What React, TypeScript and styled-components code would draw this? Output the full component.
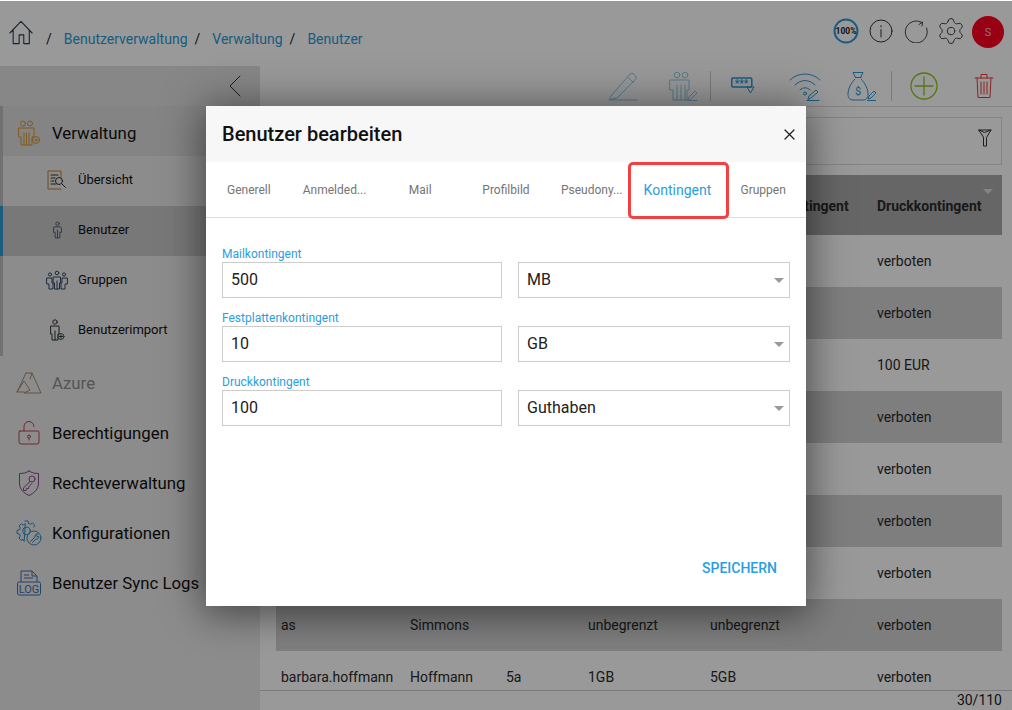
import React from 'react';
import styled, { createGlobalStyle } from 'styled-components';
import { Settings } from 'lucide-react';

const Global = createGlobalStyle`
  html, body { margin: 0; padding: 0; background: #fff; }
  body { font-family: Roboto, "Liberation Sans", sans-serif; }
  * { box-sizing: border-box; }
`;

const Page = styled.div`
  position: relative; width: 1012px; height: 710px; overflow: hidden;
  display: flex; flex-direction: column; background: #fff; color: #111;
`;
const Header = styled.header`
  flex: 0 0 66px; display: flex; align-items: center; justify-content: space-between;
  padding: 0 8px 2px 8px; background: #fff;
`;
const Crumbs = styled.nav`display: flex; align-items: flex-end; font-size: 14px; padding-top: 2px; height: 30px;`;
const HomeLink = styled.span`display: flex; width: 24px; height: 26px; margin: 0 0 1px 1px;`;
const Slash = styled.span`color: #222; margin-left: ${p => p.$m ?? 7}px; font-size: 14px;`;
const Crumb = styled.a`color: #2a9ad6; margin-left: 12px;`;
const HeadIcons = styled.div`display: flex; align-items: center;`;
const HeadSlot = styled.span`width: 35px; display: flex; justify-content: center; margin-top: -2px;`;
const Avatar = styled.div`
  width: 32px; height: 32px; border-radius: 50%; background: #ff0020; color: #f4c0c0;
  display: flex; align-items: center; justify-content: center; font-size: 11px; margin-left: 4px;
`;
const Body = styled.div`flex: 1; display: flex; min-height: 0;`;
const Sidebar = styled.aside`flex: 0 0 260px; background: #e9e9e9; display: flex; flex-direction: column;`;
const Collapse = styled.div`
  height: 40px; background: #e2e2e2; display: flex; align-items: center; justify-content: flex-end; padding-right: 19px;
`;
const Group = styled.div`border-left: 3px solid #bdbdbd; display: flex; flex-direction: column;`;
const TopItem = styled.div`
  height: 50px; display: flex; align-items: center; gap: 10px; font-size: 16.8px; padding-top: 3px;
  padding-left: ${p => (p.$inGroup ? 13 : 16)}px;
  background: ${p => (p.$open ? '#dcdcdc' : 'transparent')};
  color: ${p => (p.$muted ? '#8e8e8e' : '#111')};
`;
const SubItem = styled.div`
  height: 50px; display: flex; align-items: center; gap: 8px; font-size: 13px; padding: 0 0 3px 41px;
  margin-left: ${p => (p.$active ? '-3px' : '0')};
  border-left: ${p => (p.$active ? '3px solid #2a9ad6' : '0')};
  background: ${p => (p.$active ? '#c8c8c8' : 'transparent')};
`;
const IconBox = styled.span`flex: 0 0 26px; display: flex; justify-content: center;`;
const Main = styled.main`flex: 1; display: flex; flex-direction: column; min-width: 0; background: #fff;`;
const Toolbar = styled.div`
  flex: 0 0 41px; display: flex; justify-content: flex-end; align-items: center; border-bottom: 1px solid #ddd; background: #fff;
`;
const ToolSlot = styled.span`
  width: ${p => p.$w}px; display: flex; justify-content: center; opacity: ${p => p.$fade ?? 1};
`;
const ToolSep = styled.span`width: 1px; height: 30px; background: #ccc;`;
const Filter = styled.div`
  margin: 10px 10px 10px 16px; height: 48px; flex: 0 0 48px; border: 1px solid #ddd;
  display: flex; align-items: center; justify-content: flex-end; padding: 0 9px 6px 0;
`;
const TableWrap = styled.div`flex: 1; min-height: 0; overflow: hidden; margin: 0 10px 0 16px;`;
const Row = styled.div`
  display: grid; grid-template-columns: 129px 96px 82px 122px 167px 1fr; align-items: center;
  padding-left: 5px; padding-top: ${p => (p.$head ? 2 : 0)}px; height: ${p => (p.$head ? 60 : 52)}px; font-size: 14px; color: #2a2a2a;
  background: ${p => (p.$head ? '#aaa' : p.$odd ? '#d2d2d2' : 'transparent')};
  font-weight: ${p => (p.$head ? 700 : 400)}; position: relative;
`;
const SortArrow = styled.span`
  position: absolute; right: 9px; top: 14px; width: 0; height: 0;
  border-left: 5px solid transparent; border-right: 5px solid transparent; border-top: 5px solid #ddd;
`;
const Footer = styled.div`
  flex: 0 0 20px; border-top: 1px solid #ccc; font-size: 14px; text-align: right; padding: 1px 10px 0 0; line-height: 17px; color: #222;
`;
const Overlay = styled.div`position: absolute; inset: 1px 0 0 0; background: rgba(0,0,0,.4);`;
const Dialog = styled.section`
  position: absolute; left: 206px; top: 106px; width: 600px; height: 500px; background: #fff;
  box-shadow: 0 0 40px 4px rgba(0,0,0,.35), 0 12px 30px rgba(0,0,0,.2);
  display: flex; flex-direction: column;
`;
const DialogHead = styled.div`
  flex: 0 0 56px; background: #f7f7f7; display: flex; align-items: center; justify-content: space-between; padding: 0 11px 0 16px;
`;
const Title = styled.h2`margin: 0; font-size: 20px; font-weight: 500; color: #111;`;
const Tabs = styled.div`
  flex: 0 0 56px; display: grid; grid-template-columns: repeat(7, 1fr); border-bottom: 1px solid #ddd;
`;
const Tab = styled.div`
  position: relative; display: flex; align-items: center; justify-content: center; min-width: 0;
  font-size: ${p => (p.$active ? 14 : 12)}px; color: ${p => (p.$active ? '#2a9ee0' : '#757575')};
`;
const Marker = styled.span`
  position: absolute; left: -7px; top: 0; width: 101px; height: 57px; border: 3px solid #f44040; border-radius: 5px;
`;
const Form = styled.div`flex: 1; padding: 29px 16px 0; display: flex; flex-direction: column; gap: 13px;`;
const FieldLabel = styled.label`display: block; font-size: 12px; line-height: 14px; color: #2a9ee0; height: 15px;`;
const FieldRow = styled.div`display: grid; grid-template-columns: 280px 272px; column-gap: 16px;`;
const TextInput = styled.input`
  width: 100%; height: 36px; border: 1px solid #ccc; padding: 0 8px 1px; font: 400 16px Roboto, sans-serif; color: #222; outline: 0; background: #fff;
`;
const SelectBox = styled.div`
  height: 36px; border: 1px solid #ccc; padding: 0 5px 1px 8px; font-size: 16px; color: #222; display: flex; align-items: center; justify-content: space-between;
`;
const Caret = styled.span`
  width: 0; height: 0; border-left: 5px solid transparent; border-right: 5px solid transparent; border-top: 5px solid #999; margin-top: 1px;
`;
const Actions = styled.div`flex: 0 0 46px; display: flex; justify-content: flex-end; padding-right: 29px;`;
const SaveButton = styled.button`
  align-self: flex-start; border: 0; background: none; padding: 0; font: 500 14px Roboto, sans-serif; color: #2a9ee0;
  text-transform: uppercase; height: 16px;
`;

type P = { w?: number; h?: number; vb?: string; c?: string; sw?: number; children?: React.ReactNode };
const Svg = ({ w = 24, h = 24, vb = '0 0 24 24', c = '#333', sw = 1, children }: P) => (
  <svg width={w} height={h} viewBox={vb} fill="none" stroke={c} strokeWidth={sw} strokeLinecap="round" strokeLinejoin="round">{children}</svg>
);

const Home = () => (
  <Svg w={24} h={26} vb="0 0 26 28" c="#2a3f55" sw={1.2}>
    <path d="M1 14 13 1.5 25 14M4.5 11v14.5h6.5V16h5v9.5h6V11" />
  </Svg>
);
const Percent = () => (
  <svg width="26" height="26" viewBox="0 0 26 26">
    <circle cx="13" cy="13" r="11.5" fill="none" stroke="#2a9ad6" strokeWidth="2" />
    <text x="13" y="16" textAnchor="middle" fontSize="8.5" fontWeight="700" fontFamily="Roboto, sans-serif" fill="#222">100%</text>
  </svg>
);
const Info = () => (
  <Svg w={24} h={24}>
    <circle cx="12" cy="12" r="11" />
    <path d="M12 10.500V18M12 6.600v1.200" />
  </Svg>
);
const Refresh = () => (
  <Svg w={24} h={24} c="#444">
    <path d="M18 3.500A11 11 0 1 0 22.600 9M15 5.500 18.600 3 18 7" />
  </Svg>
);
const ChevronLeft = () => <Svg w={12} h={22} vb="0 0 12 22" c="#333"><path d="M11 1 1 11l10 10" /></Svg>;
const Person = ({ c = '#2c4a66' }: { c?: string }) => (
  <Svg w={11} h={20} vb="0 0 14 22" c={c}>
    <circle cx="7" cy="3" r="2.200" />
    <path d="M3 7h8l1 1v6h-2v7H4v-7H2V8zM7 11v10" />
  </Svg>
);
const PeopleCog = () => (
  <Svg w={24} h={26} vb="0 0 24 26" c="#d9962a">
    <circle cx="6" cy="3.500" r="2.500" /><circle cx="13" cy="3.500" r="2.500" />
    <path d="M2 8h15v9h-2v8H4v-8H2zM9.500 13v12M7 13v12M12 13v12" />
    <circle cx="19" cy="20" r="3.500" /><circle cx="19" cy="20" r="1" />
  </Svg>
);
const Overview = () => (
  <Svg w={20} h={20} vb="0 0 20 20" c="#333">
    <path d="M14 8V1H1v18h13" stroke="#c47b2b" />
    <path d="M4 5h7M4 8h4M4 11h3M4 14h5" />
    <circle cx="12" cy="11" r="3.500" /><path d="m15 14 3.500 3.500" />
  </Svg>
);
const Group3 = () => (
  <Svg w={22} h={20} vb="0 0 22 20" c="#2c4a66">
    <circle cx="11" cy="3" r="1.800" /><circle cx="4" cy="4.500" r="1.600" /><circle cx="18" cy="4.500" r="1.600" />
    <path d="M7.500 7h7v6h-1v6h-5v-6h-1zM1 8h5v5h1v6H3v-5H1zM21 8h-5v5h-1v6h4v-5h2zM11 11v8" />
  </Svg>
);
const PersonAdd = () => (
  <Svg w={16} h={22} vb="0 0 16 22" c="#333">
    <circle cx="6" cy="3" r="2.200" />
    <path d="M2 7h8v8H9v6H3v-6H2zM6 12v9" />
    <circle cx="12" cy="17.500" r="3" stroke="#2a5a70" /><path d="M12 16v3M10.500 17.500h3" />
  </Svg>
);
const Azure = () => (
  <Svg w={26} h={22} vb="0 0 26 22" c="#a58a72">
    <path d="M10 1h6l9 20H8l6-3-6-9-7 11h7M10 1 1 20M16 1l-2 6" />
  </Svg>
);
const Lock = () => (
  <Svg w={22} h={26} vb="0 0 22 26" c="#c2414b">
    <path d="M6 11V6.500a5 5 0 0 1 10 0M2 11h18a1 1 0 0 1 1 1v10a2 2 0 0 1-2 2H3a2 2 0 0 1-2-2V12a1 1 0 0 1 1-1z" />
    <circle cx="11" cy="16.500" r="1.500" /><path d="M11 18v2" />
  </Svg>
);
const ShieldKey = () => (
  <Svg w={22} h={26} vb="0 0 22 26" c="#8a4a8e">
    <path d="M11 1c3 2 6 2.500 9.500 2.500V13c0 6-4 10-9.500 12.500C5.500 23 1.500 19 1.500 13V3.500C5 3.500 8 3 11 1z" />
    <circle cx="14" cy="9" r="3" /><path d="m12 11.500-6.500 6.500v2.500H8l.5-2h2l.5-2 2.800-3" />
  </Svg>
);
const CogWrench = () => (
  <Svg w={26} h={26} vb="0 0 26 26" c="#2a8cc0">
    <path d="M9 1h3l.5 2.500 2 .8L16.500 3l2.300 2.200-1 1.800M8 21l-.8-1.500-2.200.8L3 18l1.300-2-.8-2L1 13.500v-3.200l2.500-.5.800-2L3 6l2.200-2.300 2 1.300L9 4z" />
    <circle cx="10.500" cy="11" r="3.800" />
    <circle cx="18" cy="18" r="7" />
    <path d="m14.500 21.500 4.500-4.500a2.500 2.500 0 0 1 3-3l-1.500 1.500.7 1.300 1.500-.3a2.500 2.500 0 0 1-3 2.700l-3.200 3.300" />
  </Svg>
);
const LogFile = () => (
  <svg width="24" height="26" viewBox="0 0 24 26" fill="none" stroke="#3e6da8" strokeLinejoin="round">
    <path d="M4 12V1h11l5 5v6M15 1v5h5M7 5h5M7 8h9" />
    <rect x=".5" y="12" width="23" height="13" rx="1.500" />
    <text x="12" y="23" textAnchor="middle" fontSize="11" fontFamily="Roboto, sans-serif" fill="#3e6da8" stroke="none">LOG</text>
  </svg>
);
const Pencil = () => (
  <Svg w={30} h={30} vb="0 0 30 30" c="#2a9ad6">
    <path d="M1 29h28M3 25 22 3a2.500 2.500 0 0 1 3.500 0l2 1.800a2.500 2.500 0 0 1 0 3.500L9 27l-7 1.500zM19.500 6l6 5.500" />
  </Svg>
);
const PeopleEdit = () => (
  <Svg w={30} h={30} vb="0 0 30 30" c="#2a9ad6">
    <circle cx="9" cy="4" r="2.800" /><circle cx="17" cy="4" r="2.800" />
    <path d="M2 9h19v10h-2v10H5V19H2zM13 14v15M9 14v15M17 14v15" />
    <path d="m20 29 1-3 6-6 2 2-6 6zM18 29.500h11" />
  </Svg>
);
const KeyCard = () => (
  <svg width="26" height="22" viewBox="0 0 26 22" fill="none" stroke="#2a9ad6">
    <rect x=".8" y="3" width="20" height="9" rx="1" strokeWidth="1.500" />
    <text x="10.500" y="12" textAnchor="middle" fontSize="10" fontWeight="700" fontFamily="Roboto, sans-serif" fill="#2a9ad6" stroke="none">***</text>
    <path d="m16 12 7 0-3.500 6z" />
  </svg>
);
const Wifi = () => (
  <Svg w={32} h={30} vb="0 0 32 30" c="#2a9ad6">
    <path d="M1 9c8-8 22-8 30 0M6 14c6-6 14-6 20 0M11 19c3-3 7-3 10 0" />
    <circle cx="16" cy="22.500" r="1.500" />
    <path d="m19 28 1-3 7-6 2 2-7 6zM18 29.500h12" />
  </Svg>
);
const MoneyBag = () => (
  <svg width="30" height="30" viewBox="0 0 30 30" fill="none" stroke="#2a9ad6" strokeLinejoin="round">
    <path d="M6 1.500h10l-2.500 5h-5zM8 6.500h6.500M8 8c-4 4-7 10-7 15 0 4 2 6 5 6h10c3 0 5-2 5-6 0-5-3-11-7-15" />
    <text x="11" y="24" textAnchor="middle" fontSize="11" fontFamily="Roboto, sans-serif" fill="#2a9ad6" stroke="none">$</text>
    <path d="m21 28 1-3 5-5 2 2-5 5zM20 29.500h9" />
  </svg>
);
const Plus = () => (
  <Svg w={28} h={28} vb="0 0 28 28" c="#8fc41c" sw={1.300}>
    <circle cx="14" cy="14" r="13" /><path d="M14 5v18M5 14h18" />
  </Svg>
);
const Trash = () => (
  <Svg w={20} h={26} vb="0 0 20 26" c="#ee3b3b">
    <path d="M1 5h18M7 5V1.500h6V5M3 5l1 19.500h12L17 5M7 9v12M10 9v12M13 9v12" />
  </Svg>
);
const Funnel = () => (
  <Svg w={14} h={18} vb="0 0 14 18" c="#333">
    <path d="M1 1h12L8.500 8.500V17H5.500V8.500zM1 1l5.500 2.500L13 1" />
  </Svg>
);
const CloseX = () => <Svg w={11} h={11} vb="0 0 11 11" c="#222" sw={1.300}><path d="m1 1 9 9M10 1l-9 9" /></Svg>;

const rows: string[][] = [
  ['', '', '', '', '', 'verboten'],
  ['', '', '', '', '', 'verboten'],
  ['', '', '', '', '', '100 EUR'],
  ['', '', '', '', '', 'verboten'],
  ['', '', '', '', '', 'verboten'],
  ['', '', '', '', '', 'verboten'],
  ['', '', '', '', '', 'verboten'],
  ['as', 'Simmons', '', 'unbegrenzt', 'unbegrenzt', 'verboten'],
  ['barbara.hoffmann', 'Hoffmann', '5a', '1GB', '5GB', 'verboten'],
];
const tabs = ['Generell', 'Anmelded...', 'Mail', 'Profilbild', 'Pseudony...', 'Kontingent', 'Gruppen'];
const fields = [
  { label: 'Mailkontingent', value: '500', unit: 'MB' },
  { label: 'Festplattenkontingent', value: '10', unit: 'GB' },
  { label: 'Druckkontingent', value: '100', unit: 'Guthaben' },
];

export default function App() {
  return (
    <Page>
      <Global />
      <Header>
        <Crumbs>
          <HomeLink><Home /></HomeLink>
          <Slash $m={13}>/</Slash><Crumb>Benutzerverwaltung</Crumb>
          <Slash>/</Slash><Crumb>Verwaltung</Crumb>
          <Slash>/</Slash><Crumb>Benutzer</Crumb>
        </Crumbs>
        <HeadIcons>
          <HeadSlot><Percent /></HeadSlot>
          <HeadSlot><Info /></HeadSlot>
          <HeadSlot><Refresh /></HeadSlot>
          <HeadSlot><Settings size={30} strokeWidth={0.8} color="#444" /></HeadSlot>
          <Avatar>S</Avatar>
        </HeadIcons>
      </Header>
      <Body>
        <Sidebar>
          <Collapse><ChevronLeft /></Collapse>
          <Group>
            <TopItem $open $inGroup><IconBox><PeopleCog /></IconBox>Verwaltung</TopItem>
            <SubItem><IconBox><Overview /></IconBox>Übersicht</SubItem>
            <SubItem $active><IconBox><Person /></IconBox>Benutzer</SubItem>
            <SubItem><IconBox><Group3 /></IconBox>Gruppen</SubItem>
            <SubItem><IconBox><PersonAdd /></IconBox>Benutzerimport</SubItem>
          </Group>
          <TopItem $muted><IconBox><Azure /></IconBox>Azure</TopItem>
          <TopItem><IconBox><Lock /></IconBox>Berechtigungen</TopItem>
          <TopItem><IconBox><ShieldKey /></IconBox>Rechteverwaltung</TopItem>
          <TopItem><IconBox><CogWrench /></IconBox>Konfigurationen</TopItem>
          <TopItem><IconBox><LogFile /></IconBox>Benutzer Sync Logs</TopItem>
        </Sidebar>
        <Main>
          <Toolbar>
            <ToolSlot $w={66} $fade={0.5}><Pencil /></ToolSlot>
            <ToolSlot $w={54} $fade={0.5}><PeopleEdit /></ToolSlot>
            <ToolSep />
            <ToolSlot $w={66}><KeyCard /></ToolSlot>
            <ToolSlot $w={56}><Wifi /></ToolSlot>
            <ToolSlot $w={58}><MoneyBag /></ToolSlot>
            <ToolSep />
            <ToolSlot $w={64}><Plus /></ToolSlot>
            <ToolSlot $w={56}><Trash /></ToolSlot>
          </Toolbar>
          <Filter><Funnel /></Filter>
          <TableWrap>
            <Row $head>
              <span>Benutzername</span><span>Nachname</span><span>Klasse</span>
              <span>Mailkontingent</span><span>Festplattenkontingent</span><span>Druckkontingent</span>
              <SortArrow />
            </Row>
            {rows.map((r, i) => (
              <Row key={i} $odd={i % 2 === 1}>
                {r.map((c, j) => <span key={j}>{c}</span>)}
              </Row>
            ))}
          </TableWrap>
          <Footer>30/110</Footer>
        </Main>
      </Body>
      <Overlay />
      <Dialog>
        <DialogHead>
          <Title>Benutzer bearbeiten</Title>
          <CloseX />
        </DialogHead>
        <Tabs>
          {tabs.map(t => (
            <Tab key={t} $active={t === 'Kontingent'}>
              {t}
              {t === 'Kontingent' && <Marker />}
            </Tab>
          ))}
        </Tabs>
        <Form>
          {fields.map(f => (
            <div key={f.label}>
              <FieldLabel>{f.label}</FieldLabel>
              <FieldRow>
                <TextInput defaultValue={f.value} aria-label={f.label} />
                <SelectBox>{f.unit}<Caret /></SelectBox>
              </FieldRow>
            </div>
          ))}
        </Form>
        <Actions><SaveButton>Speichern</SaveButton></Actions>
      </Dialog>
    </Page>
  );
}
